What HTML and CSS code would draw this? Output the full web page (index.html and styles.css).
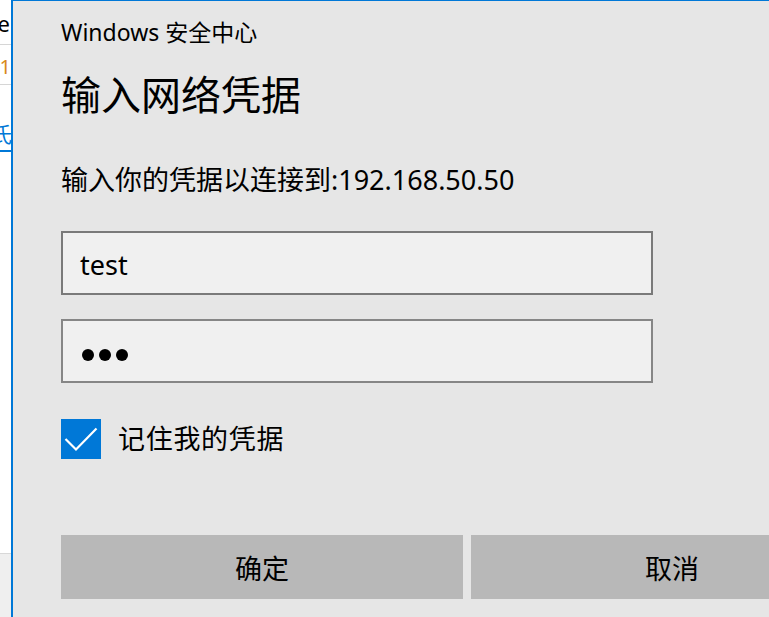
FILE: index.html
```html
<!DOCTYPE html>
<html lang="zh-CN">
<head>
<meta charset="utf-8">
<title>Windows 安全中心</title>
<link rel="stylesheet" href="styles.css">
</head>
<body>
<div class="screen">
  <aside class="behind">
    <div class="row r1">e</div>
    <div class="row r2">. <span class="orange">1</span></div>
    <div class="row r3"><span class="link">氏/</span></div>
    <div class="blank"></div>
    <div class="foot"></div>
  </aside>
  <section class="dialog">
    <p class="app">Windows 安全中心</p>
    <h1 class="heading">输入网络凭据</h1>
    <p class="prompt">输入你的凭据以连接到:192.168.50.50</p>
    <div class="field user">test</div>
    <div class="field pwd"><span class="dot"></span><span class="dot"></span><span class="dot"></span></div>
    <label class="remember">
      <span class="box">
        <svg width="40" height="40" viewBox="0 0 40 40"><polyline points="4.5,20 15,30.5 35.5,9.5" fill="none" stroke="#fff" stroke-width="2.2"/></svg>
      </span>
      <span class="label">记住我的凭据</span>
    </label>
    <div class="buttons">
      <button class="btn">确定</button>
      <button class="btn">取消</button>
    </div>
  </section>
</div>
</body>
</html>
```
FILE: styles.css
```css
html, body {
  margin: 0;
  padding: 0;
  width: 769px;
  height: 617px;
  overflow: hidden;
  background: #e6e6e6;
}
body {
  font-family: "Noto Sans", "Noto Sans CJK SC", sans-serif;
  color: #000;
}
.screen {
  display: flex;
  height: 617px;
}
.behind {
  flex: none;
  width: 11px;
  background: #fff;
  display: flex;
  flex-direction: column;
  overflow: hidden;
  font-size: 22px;
  white-space: nowrap;
}
.row {
  flex: none;
  box-sizing: border-box;
  border-bottom: 1px solid #d6d6d6;
  display: flex;
  justify-content: flex-end;
  line-height: 30px;
}
.r1 { height: 45px; padding-top: 8px; padding-right: 1px; }
.r2 { height: 40px; padding-top: 7px; font-size: 20px; color: #333; }
.orange { color: #d98a1a; }
.r3 {
  height: 67px;
  border-bottom: 2px solid #0078d7;
  align-items: flex-end;
  padding-bottom: 1px;
  justify-content: flex-start;
}
.link { color: #0078d7; font-size: 21px; margin-left: -9px; }
.blank { flex: none; height: 401px; }
.foot { flex: 1; background: #efefef; border-top: 1px solid #d8d8d8; }

.dialog {
  flex: none;
  width: 900px;
  box-sizing: border-box;
  border-left: 2px solid #0078d7;
  border-top: 1px solid #0078d7;
  padding: 16px 0 0 48px;
  background: #e6e6e6;
}
.app {
  margin: 0;
  font-size: 23px;
  line-height: 30px;
}
.heading {
  margin: 23px 0 0;
  font-size: 40px;
  line-height: 50px;
  font-weight: normal;
}
.prompt {
  margin: 42px 0 0;
  font-size: 27px;
  line-height: 36px;
}
.field {
  box-sizing: border-box;
  width: 592px;
  height: 64px;
  border: 2px solid #7a7a7a;
  background: #f0f0f0;
  display: flex;
  align-items: center;
  font-size: 27px;
}
.user {
  margin-top: 33px;
  padding: 2px 0 0 17px;
}
.pwd {
  margin-top: 24px;
  border-color: #868686;
  padding: 7px 0 0 19px;
  gap: 5px;
}
.dot {
  width: 12px;
  height: 12px;
  border-radius: 50%;
  background: #000;
}
.remember {
  margin-top: 36px;
  display: flex;
  align-items: center;
  gap: 17px;
  font-size: 27px;
}
.box {
  width: 40px;
  height: 40px;
  background: #0078d7;
  display: block;
}
.box svg { display: block; }
.label { line-height: 36px; letter-spacing: 0.7px; }
.buttons {
  margin-top: 76px;
  display: flex;
  gap: 8px;
}
.btn {
  flex: none;
  width: 402px;
  height: 64px;
  border: none;
  background: #b8b8b8;
  font-family: "Noto Sans", "Noto Sans CJK SC", sans-serif;
  font-size: 27px;
  color: #000;
  padding: 0;
}
```
